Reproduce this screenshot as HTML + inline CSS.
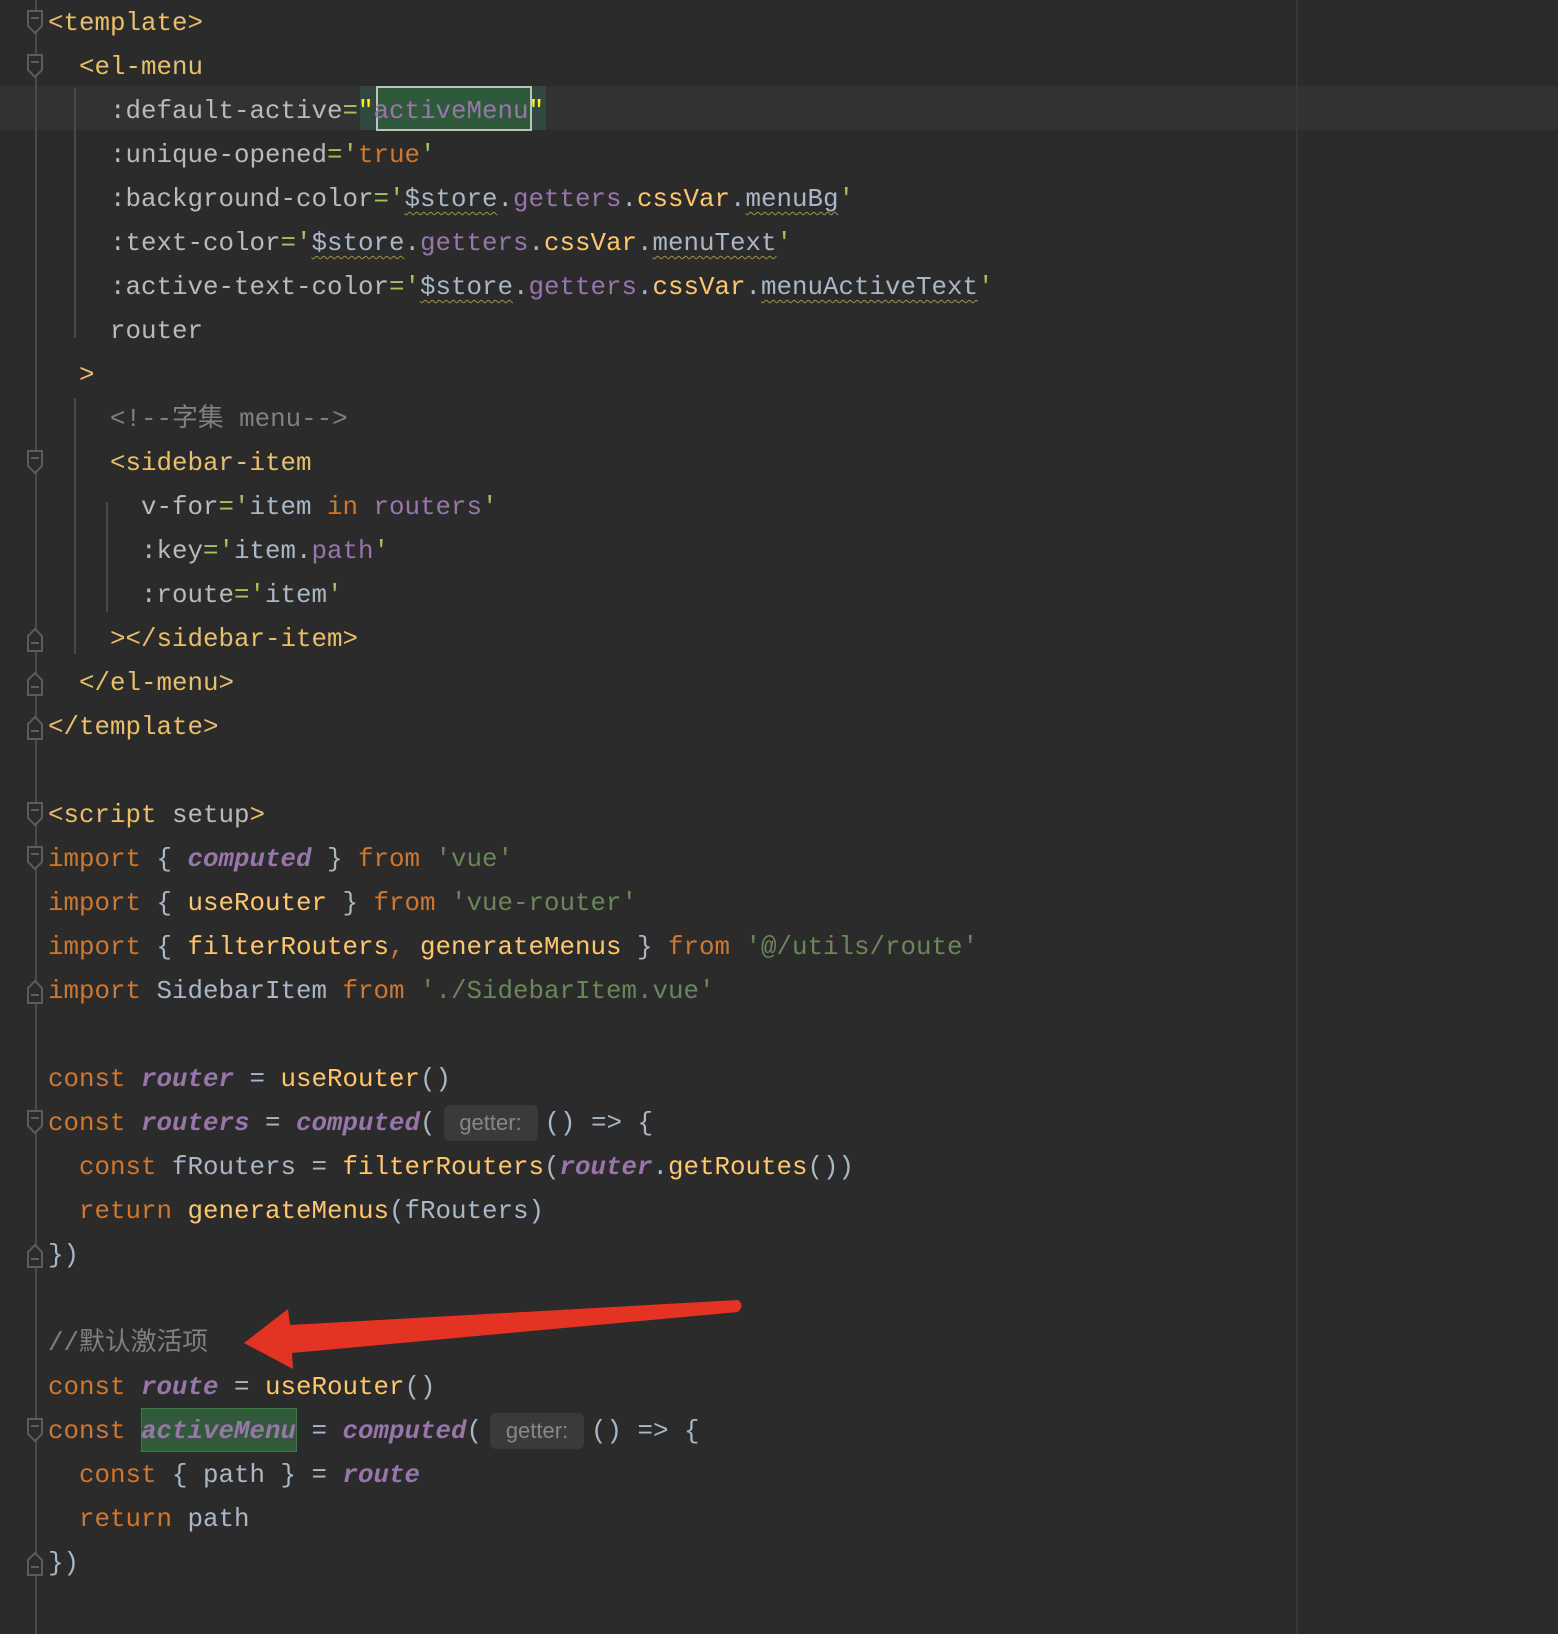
<!DOCTYPE html>
<html><head><meta charset="utf-8"><style>
body{margin:0;width:1558px;height:1634px;background:#2b2b2b;overflow:hidden;position:relative}
#code{position:absolute;left:48px;top:1px;font-family:"Liberation Mono","Noto Sans CJK SC",monospace;font-size:25.83px;line-height:44px;color:#a9b7c6;white-space:pre}
.l{height:44px}
.t{color:#e8bf6a}.a{color:#bababa}.e{color:#a5c25c}.k{color:#cc7832}.s{color:#6a8759}.p{color:#9876aa}.i{color:#9876aa;font-style:italic;font-weight:bold}.f{color:#ffc66d}.c{color:#808080}.y{color:#ffef28}
.w{text-decoration:underline wavy #9a9640;text-decoration-thickness:1px;text-underline-offset:5px}
.h{display:inline-block;width:94px;height:36px;line-height:36px;margin:0 7px 0 8px;background:#3a3a3a;border-radius:6px;color:#878787;font-family:"Liberation Sans",sans-serif;font-size:22px;text-align:center;vertical-align:middle;font-style:normal;font-weight:normal}
</style></head><body>
<div style="position:absolute;left:0;top:86px;width:1558px;height:44px;background:#323232"></div>
<div style="position:absolute;left:1296px;top:0;width:2px;height:1634px;background:#373737"></div>
<div style="position:absolute;left:360px;top:86px;width:186px;height:44px;background:#32473e"></div>
<div style="position:absolute;left:376px;top:86px;width:152px;height:41px;border:2px solid #b8c4bc;background:#2f5a3a"></div>
<div style="position:absolute;left:141px;top:1408px;width:156px;height:44px;background:#32593a;border:1px solid #3d7a45;box-sizing:border-box"></div>
<svg style="position:absolute;left:0;top:0" width="1558" height="1634">
<g stroke="#4a4a4a" stroke-width="2">
<line x1="36" y1="0" x2="36" y2="1634"/>
<line x1="75" y1="88" x2="75" y2="338"/>
<line x1="75" y1="398" x2="75" y2="654"/>
<line x1="107" y1="502" x2="107" y2="612"/>
</g>
<g fill="#2b2b2b" stroke="#5c5c5c" stroke-width="2">
<path d="M28 11H42V26L35 33L28 26Z"/><path d="M31 18H39"/>
<path d="M28 55H42V70L35 77L28 70Z"/><path d="M31 62H39"/>
<path d="M28 451H42V466L35 473L28 466Z"/><path d="M31 458H39"/>
<path d="M28 803H42V818L35 825L28 818Z"/><path d="M31 810H39"/>
<path d="M28 847H42V862L35 869L28 862Z"/><path d="M31 854H39"/>
<path d="M28 1111H42V1126L35 1133L28 1126Z"/><path d="M31 1118H39"/>
<path d="M28 1419H42V1434L35 1441L28 1434Z"/><path d="M31 1426H39"/>
<path d="M28 651H42V636L35 629L28 636Z"/><path d="M31 643H39"/>
<path d="M28 695H42V680L35 673L28 680Z"/><path d="M31 687H39"/>
<path d="M28 739H42V724L35 717L28 724Z"/><path d="M31 731H39"/>
<path d="M28 1003H42V988L35 981L28 988Z"/><path d="M31 995H39"/>
<path d="M28 1267H42V1252L35 1245L28 1252Z"/><path d="M31 1259H39"/>
<path d="M28 1575H42V1560L35 1553L28 1560Z"/><path d="M31 1567H39"/>
</g>
<path d="M244 1343L288 1309L290 1325L738 1300Q745 1305 738 1312L292 1353L293 1369Z" fill="#e53323"/>
</svg>
<div id="code"><div class="l"><span class="t">&lt;template&gt;</span></div><div class="l">  <span class="t">&lt;el-menu</span></div><div class="l">    <span class="a">:default-active</span><span class="e">=</span><span class="y">"</span><span class="p">activeMenu</span><span class="y">"</span></div><div class="l">    <span class="a">:unique-opened</span><span class="e">='</span><span class="k">true</span><span class="e">'</span></div><div class="l">    <span class="a">:background-color</span><span class="e">='</span><span class="w">$store</span>.<span class="p">getters</span>.<span class="f">cssVar</span>.<span class="w">menuBg</span><span class="e">'</span></div><div class="l">    <span class="a">:text-color</span><span class="e">='</span><span class="w">$store</span>.<span class="p">getters</span>.<span class="f">cssVar</span>.<span class="w">menuText</span><span class="e">'</span></div><div class="l">    <span class="a">:active-text-color</span><span class="e">='</span><span class="w">$store</span>.<span class="p">getters</span>.<span class="f">cssVar</span>.<span class="w">menuActiveText</span><span class="e">'</span></div><div class="l">    <span class="a">router</span></div><div class="l">  <span class="t">&gt;</span></div><div class="l">    <span class="c">&lt;!--字集 menu--&gt;</span></div><div class="l">    <span class="t">&lt;sidebar-item</span></div><div class="l">      <span class="a">v-for</span><span class="e">='</span>item <span class="k">in</span> <span class="p">routers</span><span class="e">'</span></div><div class="l">      <span class="a">:key</span><span class="e">='</span>item.<span class="p">path</span><span class="e">'</span></div><div class="l">      <span class="a">:route</span><span class="e">='</span>item<span class="e">'</span></div><div class="l">    <span class="t">&gt;&lt;/sidebar-item&gt;</span></div><div class="l">  <span class="t">&lt;/el-menu&gt;</span></div><div class="l"><span class="t">&lt;/template&gt;</span></div><div class="l"> </div><div class="l"><span class="t">&lt;script </span><span class="a">setup</span><span class="t">&gt;</span></div><div class="l"><span class="k">import</span> { <span class="i">computed</span> } <span class="k">from</span> <span class="s">'vue'</span></div><div class="l"><span class="k">import</span> { <span class="f">useRouter</span> } <span class="k">from</span> <span class="s">'vue-router'</span></div><div class="l"><span class="k">import</span> { <span class="f">filterRouters</span><span class="k">,</span> <span class="f">generateMenus</span> } <span class="k">from</span> <span class="s">'@/utils/route'</span></div><div class="l"><span class="k">import</span> SidebarItem <span class="k">from</span> <span class="s">'./SidebarItem.vue'</span></div><div class="l"> </div><div class="l"><span class="k">const</span> <span class="i">router</span> = <span class="f">useRouter</span>()</div><div class="l"><span class="k">const</span> <span class="i">routers</span> = <span class="i">computed</span>(<span class="h">getter:</span>() =&gt; {</div><div class="l">  <span class="k">const</span> fRouters = <span class="f">filterRouters</span>(<span class="i">router</span>.<span class="f">getRoutes</span>())</div><div class="l">  <span class="k">return</span> <span class="f">generateMenus</span>(fRouters)</div><div class="l">})</div><div class="l"> </div><div class="l"><span class="c">//默认激活项</span></div><div class="l"><span class="k">const</span> <span class="i">route</span> = <span class="f">useRouter</span>()</div><div class="l"><span class="k">const</span> <span class="i">activeMenu</span> = <span class="i">computed</span>(<span class="h">getter:</span>() =&gt; {</div><div class="l">  <span class="k">const</span> { path } = <span class="i">route</span></div><div class="l">  <span class="k">return</span> path</div><div class="l">})</div></div>
</body></html>
